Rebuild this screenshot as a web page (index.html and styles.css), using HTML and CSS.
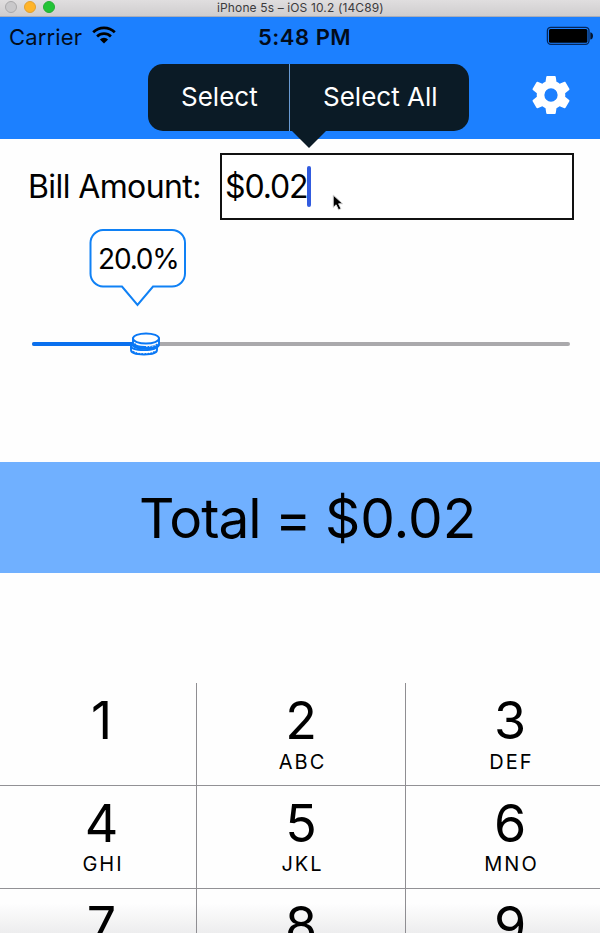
FILE: index.html
```html
<!DOCTYPE html>
<html lang="en">
<head>
<meta charset="utf-8">
<title>Tip Calculator</title>
<link rel="stylesheet" href="styles.css">
</head>
<body>
<div class="window">
  <div class="titlebar">
    <div class="lights"><i class="light"></i><i class="light light-min"></i><i class="light light-max"></i></div>
    <span class="title">iPhone 5s – iOS 10.2 (14C89)</span>
  </div>
  <header class="header">
    <div class="status">
      <div class="network">
        <span class="carrier">Carrier</span>
        <svg class="wifi" width="24" height="18" viewBox="0 0 24 18">
          <path d="M1.2 6.3a15.5 15.5 0 0 1 21.6 0" fill="none" stroke="#000" stroke-width="2.7"/>
          <path d="M5.1 10.5a9.9 9.9 0 0 1 13.8 0" fill="none" stroke="#000" stroke-width="2.7"/>
          <path d="M12 17.6 7.9 13.5a5.8 5.8 0 0 1 8.2 0z" fill="#000"/>
        </svg>
      </div>
      <span class="clock">5:48 PM</span>
      <svg class="battery" width="48" height="20" viewBox="0 0 48 20">
        <rect x="1.4" y="1.3" width="41.6" height="17" rx="3.5" fill="none" stroke="#04265a" stroke-width="1.3"/>
        <rect x="3" y="3" width="38.4" height="13.7" rx="1.5" fill="#000"/>
        <path d="M44.3 6.3q2.7.6 2.7 3.6t-2.7 3.6z" fill="#03142e"/>
      </svg>
    </div>
    <svg class="gear" width="38" height="38" viewBox="2 2 20 20">
      <path fill="#fff" d="M19.430 12.980c.04-.32.07-.64.07-.98s-.03-.66-.07-.98l2.110-1.650c.19-.15.24-.42.12-.64l-2-3.460c-.12-.22-.39-.3-.61-.22l-2.490 1c-.52-.4-1.080-.73-1.690-.98l-.38-2.650C14.460 2.180 14.250 2 14 2h-4c-.25 0-.46.18-.49.42l-.38 2.650c-.61.25-1.170.59-1.690.98l-2.490-1c-.23-.09-.49 0-.61.22l-2 3.460c-.13.22-.07.49.12.64l2.110 1.650c-.04.32-.07.65-.07.98s.03.66.07.98l-2.110 1.650c-.19.15-.24.42-.12.64l2 3.460c.12.22.39.3.61.22l2.490-1c.52.4 1.080.73 1.690.98l.38 2.650c.03.24.24.42.49.42h4c.25 0 .46-.18.49-.42l.38-2.650c.61-.25 1.170-.59 1.690-.98l2.490 1c.23.09.49 0 .61-.22l2-3.460c.12-.22.07-.49-.12-.64zM12 15.500a3.500 3.500 0 1 1 0-7 3.500 3.500 0 0 1 0 7z"/>
    </svg>
    <div class="menu">
      <span class="menu-item item-select">Select</span>
      <span class="menu-item item-all">Select All</span>
      <svg class="menu-arrow" width="36" height="18" viewBox="0 0 36 18"><path d="M0 0h36L18 18z" fill="#0b1b26"/></svg>
    </div>
  </header>
  <main class="main">
    <div class="bill">
      <label class="bill-label">Bill Amount:</label>
      <div class="bill-field"><span class="bill-value">$0.02</span><i class="caret"></i>
        <svg class="pointer" width="13" height="18" viewBox="0 0 13 18"><path d="M1.200 1v12.500l2.900-2.700 2.400 5 2.500-1.100-2.400-4.900h4.200z" fill="#000" stroke="#ddd" stroke-width="1"/></svg>
      </div>
    </div>
    <div class="bubble">
      <svg class="bubble-shape" width="98" height="79" viewBox="0 0 98 79"><path d="M14 2h69a13 13 0 0 1 13 13V45.500a13 13 0 0 1-13 13H64L48.500 77 33 58.500H14A13 13 0 0 1 1.500 45.500V15A13 13 0 0 1 14 2z" fill="#fff" stroke="#1081f5" stroke-width="2"/></svg>
      <span class="percent">20.0%</span>
    </div>
    <div class="slider">
      <div class="fill"></div>
      <svg class="coins" width="32" height="26" viewBox="0 0 32 26">
        <g fill="#fff" stroke="#0a78f5" stroke-width="1.900">
          <path d="M2 14.500v4.500c0 6 26 6 26 0v-4.500z"/>
          <path d="M2 15c0 5.500 26 5.500 26 0" fill="none"/>
          <path d="M4 7.500v6c0 5.800 26 5.800 26 0v-6z"/>
          <path d="M5 12.500c1 5 20 5.500 24 1" stroke-width="3" fill="none"/>
          <ellipse cx="17" cy="7.500" rx="13" ry="5"/>
          <path d="M4 20.500c4 3.500 18 3.500 22 0" stroke-dasharray="1.500 1.500" fill="none"/>
        </g>
        <path d="M17 15.500q7 0 11-2" fill="none" stroke="#b9cfe9" stroke-width="1.200" stroke-dasharray="1.600 1.200"/>
      </svg>
    </div>
  </main>
  <div class="total"><span class="total-text"><span class="total-name">Total = </span>$0.02</span></div>
  <div class="keypad">
    <div class="key"><b>1</b></div>
    <div class="key"><b>2</b><small>ABC</small></div>
    <div class="key"><b>3</b><small>DEF</small></div>
    <div class="key"><b>4</b><small>GHI</small></div>
    <div class="key"><b>5</b><small>JKL</small></div>
    <div class="key"><b>6</b><small>MNO</small></div>
    <div class="key"><b>7</b></div>
    <div class="key"><b>8</b></div>
    <div class="key"><b>9</b></div>
  </div>
</div>
</body>
</html>
```
FILE: styles.css
```css
* { box-sizing: border-box; }
body { margin: 0; background: #fefefe; color: #000; font-family: Inter, "Liberation Sans", sans-serif; }
.window { width: 600px; height: 933px; overflow: hidden; display: flex; flex-direction: column; white-space: nowrap; }

.titlebar { height: 17px; flex: none; display: flex; background: linear-gradient(#e0dedf, #cfcdce); border-bottom: 1px solid #a9adb8; }
.lights { display: flex; gap: 7px; padding: 1px 0 0 5px; width: 217px; }
.light { width: 12px; height: 12px; border-radius: 50%; background: #c9c8ca; border: 1px solid #aaa9ab; }
.light-min { background: #ffb429; border-color: #e2a02f; }
.light-max { background: #22c436; border-color: #25ad36; }
.title { font-size: 12px; line-height: 15px; letter-spacing: 0.13px; color: #3c3b3d; }

.header { position: relative; flex: none; height: 122px; background: #1c80ff; }
.status { height: 39px; display: flex; justify-content: space-between; }
.network { display: flex; width: 249px; padding-left: 9px; gap: 10px; }
.carrier { font-size: 22px; line-height: 40px; letter-spacing: 0.15px; color: #020c1b; }
.wifi { margin-top: 9px; }
.clock { flex: 1; padding-left: 9px; font-size: 22px; font-weight: 600; line-height: 40px; letter-spacing: 0.5px; color: #020c1b; }
.battery { margin: 9px 6px 0 0; }
.gear { display: block; margin: 20px 0 0 532px; }

.menu { position: absolute; left: 148px; top: 47px; width: 321px; height: 67px; display: flex; border-radius: 15px; background: #0b1b26; color: #fff; }
.menu-item { font-size: 26px; line-height: 66px; }
.item-select { width: 142px; padding-left: 33px; border-right: 1px solid #6a9bd3; }
.item-all { padding-left: 33px; }
.menu-arrow { position: absolute; left: 143px; top: 66px; z-index: 1; }

.main { flex: none; height: 323px; padding-top: 14px; }
.bill { display: flex; height: 67px; padding-left: 28px; }
.bill-label { width: 192px; font-size: 32px; line-height: 68px; letter-spacing: -0.6px; }
.bill-field { position: relative; display: flex; align-items: center; width: 354px; padding-left: 3px; border: 2px solid #111; background: #fff; }
.bill-value { width: 82px; font-size: 32px; line-height: 64px; letter-spacing: -1.1px; }
.caret { width: 4px; height: 41px; border-radius: 2px; background: #315bdf; }
.pointer { position: absolute; left: 110px; top: 39px; }
.bubble { position: relative; width: 98px; height: 79px; margin: 8px 0 0 89px; }
.bubble-shape { display: block; }
.percent { position: absolute; left: 9px; top: 0; font-size: 28px; line-height: 62px; letter-spacing: -1.2px; }
.slider { position: relative; width: 538px; height: 4px; margin: 35px 0 0 32px; border-radius: 2px; background: #aaa9ac; }
.fill { width: 112px; height: 4px; border-radius: 2px; background: #0a70ee; }
.coins { position: absolute; left: 97px; top: -11px; }

.total { flex: none; height: 111px; background: #70b0ff; padding-left: 139px; }
.total-text { font-size: 55px; line-height: 112px; }
.total-name { letter-spacing: -1px; }

.keypad { flex: none; margin-top: 110px; width: 615px; height: 250px; display: grid; grid-template-columns: 197px 209px 209px; grid-template-rows: 103px 103px 44px; background: linear-gradient(#fefefe 220px, #ececed 252px); }
.key { display: flex; flex-direction: column; align-items: center; border-right: 1px solid #8f8e92; border-bottom: 1px solid #929195; }
.key:nth-child(3n+1) { padding-left: 7px; }
.key b { height: 60px; margin-top: 8px; font-size: 52px; font-weight: 400; line-height: 60px; }
.key small { font-size: 20px; line-height: 24px; letter-spacing: 2px; margin: -1px -3px 0 0; }
.key:nth-child(n+4) small { margin-top: -2px; }
.key:nth-child(n+7) { border-bottom: 0; }
.key:nth-child(n+7) b { margin-top: 7px; }
```
